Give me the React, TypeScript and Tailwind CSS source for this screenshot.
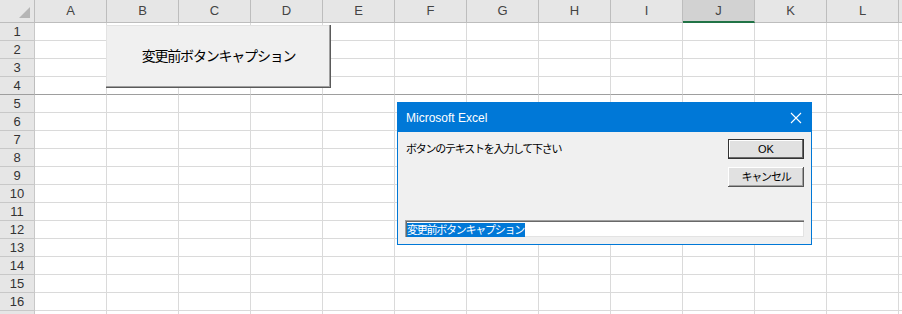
import React from "react"

const cols = ["A", "B", "C", "D", "E", "F", "G", "H", "I", "J", "K", "L"]
const rows = Array.from({ length: 17 }, (_, i) => i + 1)

const font = "font-['Liberation_Sans','Noto_Sans_CJK_JP',sans-serif]"

const HeaderRow = () => (
    <div className="flex h-[23px]">
        <div className="relative w-[35px] shrink-0 bg-[#e6e6e6] border-r border-b border-[#bdbdbd]">
            <div className="absolute right-[4px] bottom-[4px] w-0 h-0 border-l-[11px] border-b-[11px] border-l-transparent border-b-[#b5b5b5]" />
        </div>
        {cols.map((c) => (
            <div
                key={c}
                className={
                    c === "J"
                        ? "w-[72px] shrink-0 flex items-center justify-center bg-[#d2d2d2] border-r border-[#bdbdbd] border-b-2 border-b-[#217346] text-[13px] text-[#444]"
                        : "w-[72px] shrink-0 flex items-center justify-center bg-[#e6e6e6] border-r border-b border-[#bdbdbd] text-[13px] text-[#444]"
                }
            >
                {c}
            </div>
        ))}
        <div className="flex-1 bg-[#e6e6e6] border-b border-[#bdbdbd]" />
    </div>
)

const SheetRow = ({ n }: { n: number }) => {
    const frozen = n === 4
    return (
        <div className="flex h-[18px]">
            <div
                className={
                    frozen
                        ? "w-[35px] shrink-0 flex items-center justify-center bg-[#e6e6e6] border-r border-[#bdbdbd] border-b border-b-[#9e9e9e] text-[13px] text-[#333]"
                        : "w-[35px] shrink-0 flex items-center justify-center bg-[#e6e6e6] border-r border-b border-[#c8c8c8] text-[13px] text-[#333]"
                }
            >
                {/* row 17 only peeks in at the bottom edge */}
                {n < 17 ? n : ""}
            </div>
            {cols.map((c) => (
                <div
                    key={c}
                    className={
                        frozen
                            ? "w-[72px] shrink-0 border-r border-[#dadada] border-b border-b-[#9e9e9e]"
                            : "w-[72px] shrink-0 border-r border-b border-[#dadada]"
                    }
                />
            ))}
            <div className={frozen ? "flex-1 border-b border-[#9e9e9e]" : "flex-1 border-b border-[#dadada]"} />
        </div>
    )
}

const InputDialog = () => (
    <div className="absolute left-[397px] top-[102px] w-[415px] h-[143px] flex flex-col border border-[#0078d7] bg-[#f0f0f0]">
        <div className="h-[29px] flex items-center justify-between pl-[8px] pr-[9px] bg-[#0078d7] text-white text-[12px]">
            <span>Microsoft Excel</span>
            <svg width="12" height="12" viewBox="0 0 12 12">
                <path d="M1 1 L11 11 M11 1 L1 11" stroke="#fff" strokeWidth="1.1" />
            </svg>
        </div>
        <div className="flex-1 flex flex-col px-[7px] pt-[7px] pb-[7px]">
            <div className="flex justify-between">
                <div className="ml-[1px] pt-[2px] text-[11px] tracking-[-1.25px] text-black">
                    ボタンのテキストを入力して下さい
                </div>
                <div className="flex flex-col gap-[8px]">
                    <button className="w-[76px] h-[20px] flex items-center justify-center border border-[#333] bg-[#e1e1e1] shadow-[inset_-1px_-1px_#696969,inset_1px_1px_#fff] text-[11px] text-black">
                        OK
                    </button>
                    <button className="w-[76px] h-[20px] flex items-center justify-center bg-[#e1e1e1] shadow-[inset_-1px_-1px_#555,inset_1px_1px_#fff,inset_-2px_-2px_#a0a0a0] text-[11px] tracking-[-1.2px] text-black">
                        キャンセル
                    </button>
                </div>
            </div>
            <div className="mt-auto h-[17px] flex items-center pl-[2px] bg-white shadow-[inset_1px_1px_#a0a0a0,inset_2px_2px_#696969,inset_-1px_-1px_#e3e3e3]">
                <span className="h-[14px] mt-[2px] leading-[14px] bg-[#0078d7] text-white text-[11px] tracking-[-1.25px] pr-[1px]">
                    変更前ボタンキャプション
                </span>
            </div>
        </div>
    </div>
)

export default function App() {
    return (
        <div className={`relative w-[902px] h-[314px] overflow-hidden bg-white ${font}`}>
            <HeaderRow />
            {rows.map((n) => (
                <SheetRow key={n} n={n} />
            ))}
            <div className="absolute left-[106px] top-[25px] w-[225px] h-[63px] flex items-center justify-center bg-[#f0f0f0] shadow-[inset_-1px_-1px_#5a5a5a,inset_-2px_-2px_#a0a0a0,inset_1px_1px_#e3e3e3] text-[14px] tracking-[-1.2px] text-black">
                変更前ボタンキャプション
            </div>
            <InputDialog />
        </div>
    )
}
